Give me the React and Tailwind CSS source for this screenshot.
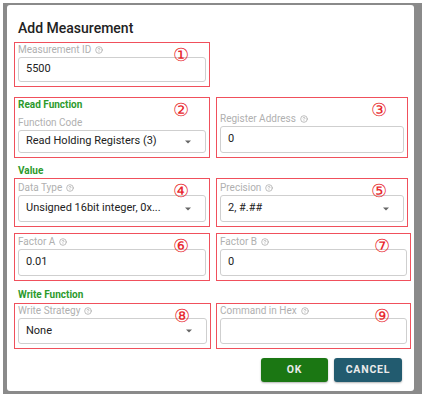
import { CircleHelp } from "lucide-react";

function Help() {
  return <CircleHelp size={8} strokeWidth={2.2} className="ml-[4px] inline-block text-[#a8a8a8]" />;
}

function Caret() {
  return <span className="absolute right-[14px] top-1/2 -translate-y-1/2 h-0 w-0 border-x-[3px] border-t-[3px] border-x-transparent border-t-[#666]" />;
}

function Field({ label, value, select, num, heading, className = "" }) {
  return (
    <div className={"relative flex flex-col justify-end border-[1.5px] border-[#f0505c] px-[3px] pb-[4px] " + className}>
      {heading ? (
        <div className="mb-[5px] text-[10px] font-bold leading-[13px] text-[#2c9a2c]">{heading}</div>
      ) : null}
      <div className="flex items-center text-[10px] leading-[13px] text-[#b0b0b0]">
        {label}
        {!heading ? <Help /> : null}
      </div>
      <div className="relative mt-[1px] flex h-[27px] items-center rounded-[3px] border border-[#cfcfcf] bg-white pl-[7px] text-[11px] text-[#222]">
        {value}
        {select ? <Caret /> : null}
      </div>
      <span className="absolute right-[20px] top-[3px] text-[18px] leading-[18px] text-[#e8282e]">{num}</span>
    </div>
  );
}

export default function App() {
  return (
    <div className="h-[400px] w-[422px] bg-white pl-[3px] pt-[3px]" style={{ fontFamily: "Roboto, 'Liberation Sans', sans-serif" }}>
      <div className="h-[391px] bg-[#8a8a8a] pl-[4px] pr-[8px] pt-[2px] pb-[3px]">
        <div className="h-full rounded-[3px] bg-white px-[7px] pt-[14px]">
          <h2 className="pl-[4px] text-[14px] font-medium leading-[18px] text-[#222]">Add Measurement</h2>

          <div className="mt-[5px] grid grid-cols-[196px_194px] gap-x-[6px]">
            <Field label="Measurement ID" value="5500" num="①" className="h-[45px]" />
            <div />
          </div>

          <div className="mt-[10px] grid grid-cols-[196px_192px] gap-x-[6px]">
            <Field heading="Read Function" label="Function Code" value="Read Holding Registers (3)" select num="②" className="h-[61px]" />
            <Field label="Register Address" value="0" num="③" className="h-[61px]" />
          </div>

          <div className="mt-[6px] pl-[4px] text-[10px] font-bold leading-[13px] text-[#2c9a2c]">Value</div>

          <div className="mt-[1px] grid grid-cols-[196px_192px] gap-x-[6px] gap-y-[6px]">
            <Field label="Data Type" value="Unsigned 16bit integer, 0x..." select num="④" className="h-[49px]" />
            <Field label="Precision" value="2, #.##" select num="⑤" className="h-[49px]" />
            <Field label="Factor A" value="0.01" num="⑥" className="h-[48px]" />
            <Field label="Factor B" value="0" num="⑦" className="h-[48px] w-[195px]" />
          </div>

          <div className="mt-[7px] pl-[4px] text-[10px] font-bold leading-[13px] text-[#2c9a2c]">Write Function</div>

          <div className="mt-[2px] grid grid-cols-[197px_195px] gap-x-[5px]">
            <Field label="Write Strategy" value="None" select num="⑧" className="h-[46px]" />
            <Field label="Command in Hex" value="" num="⑨" className="h-[46px]" />
          </div>

          <div className="mt-[9px] flex justify-end gap-[6px] pr-[5px]">
            <button className="h-[24px] w-[67px] rounded-[3px] bg-[#1b7713] text-[10.5px] font-bold tracking-[0.8px] text-[#eaeaea] shadow-[0_1px_2px_rgba(0,0,0,0.3)]">OK</button>
            <button className="h-[24px] w-[68px] rounded-[3px] bg-[#225b6f] text-[10.5px] font-bold tracking-[0.8px] text-[#eaeaea] shadow-[0_1px_2px_rgba(0,0,0,0.3)]">CANCEL</button>
          </div>
        </div>
      </div>
    </div>
  );
}
